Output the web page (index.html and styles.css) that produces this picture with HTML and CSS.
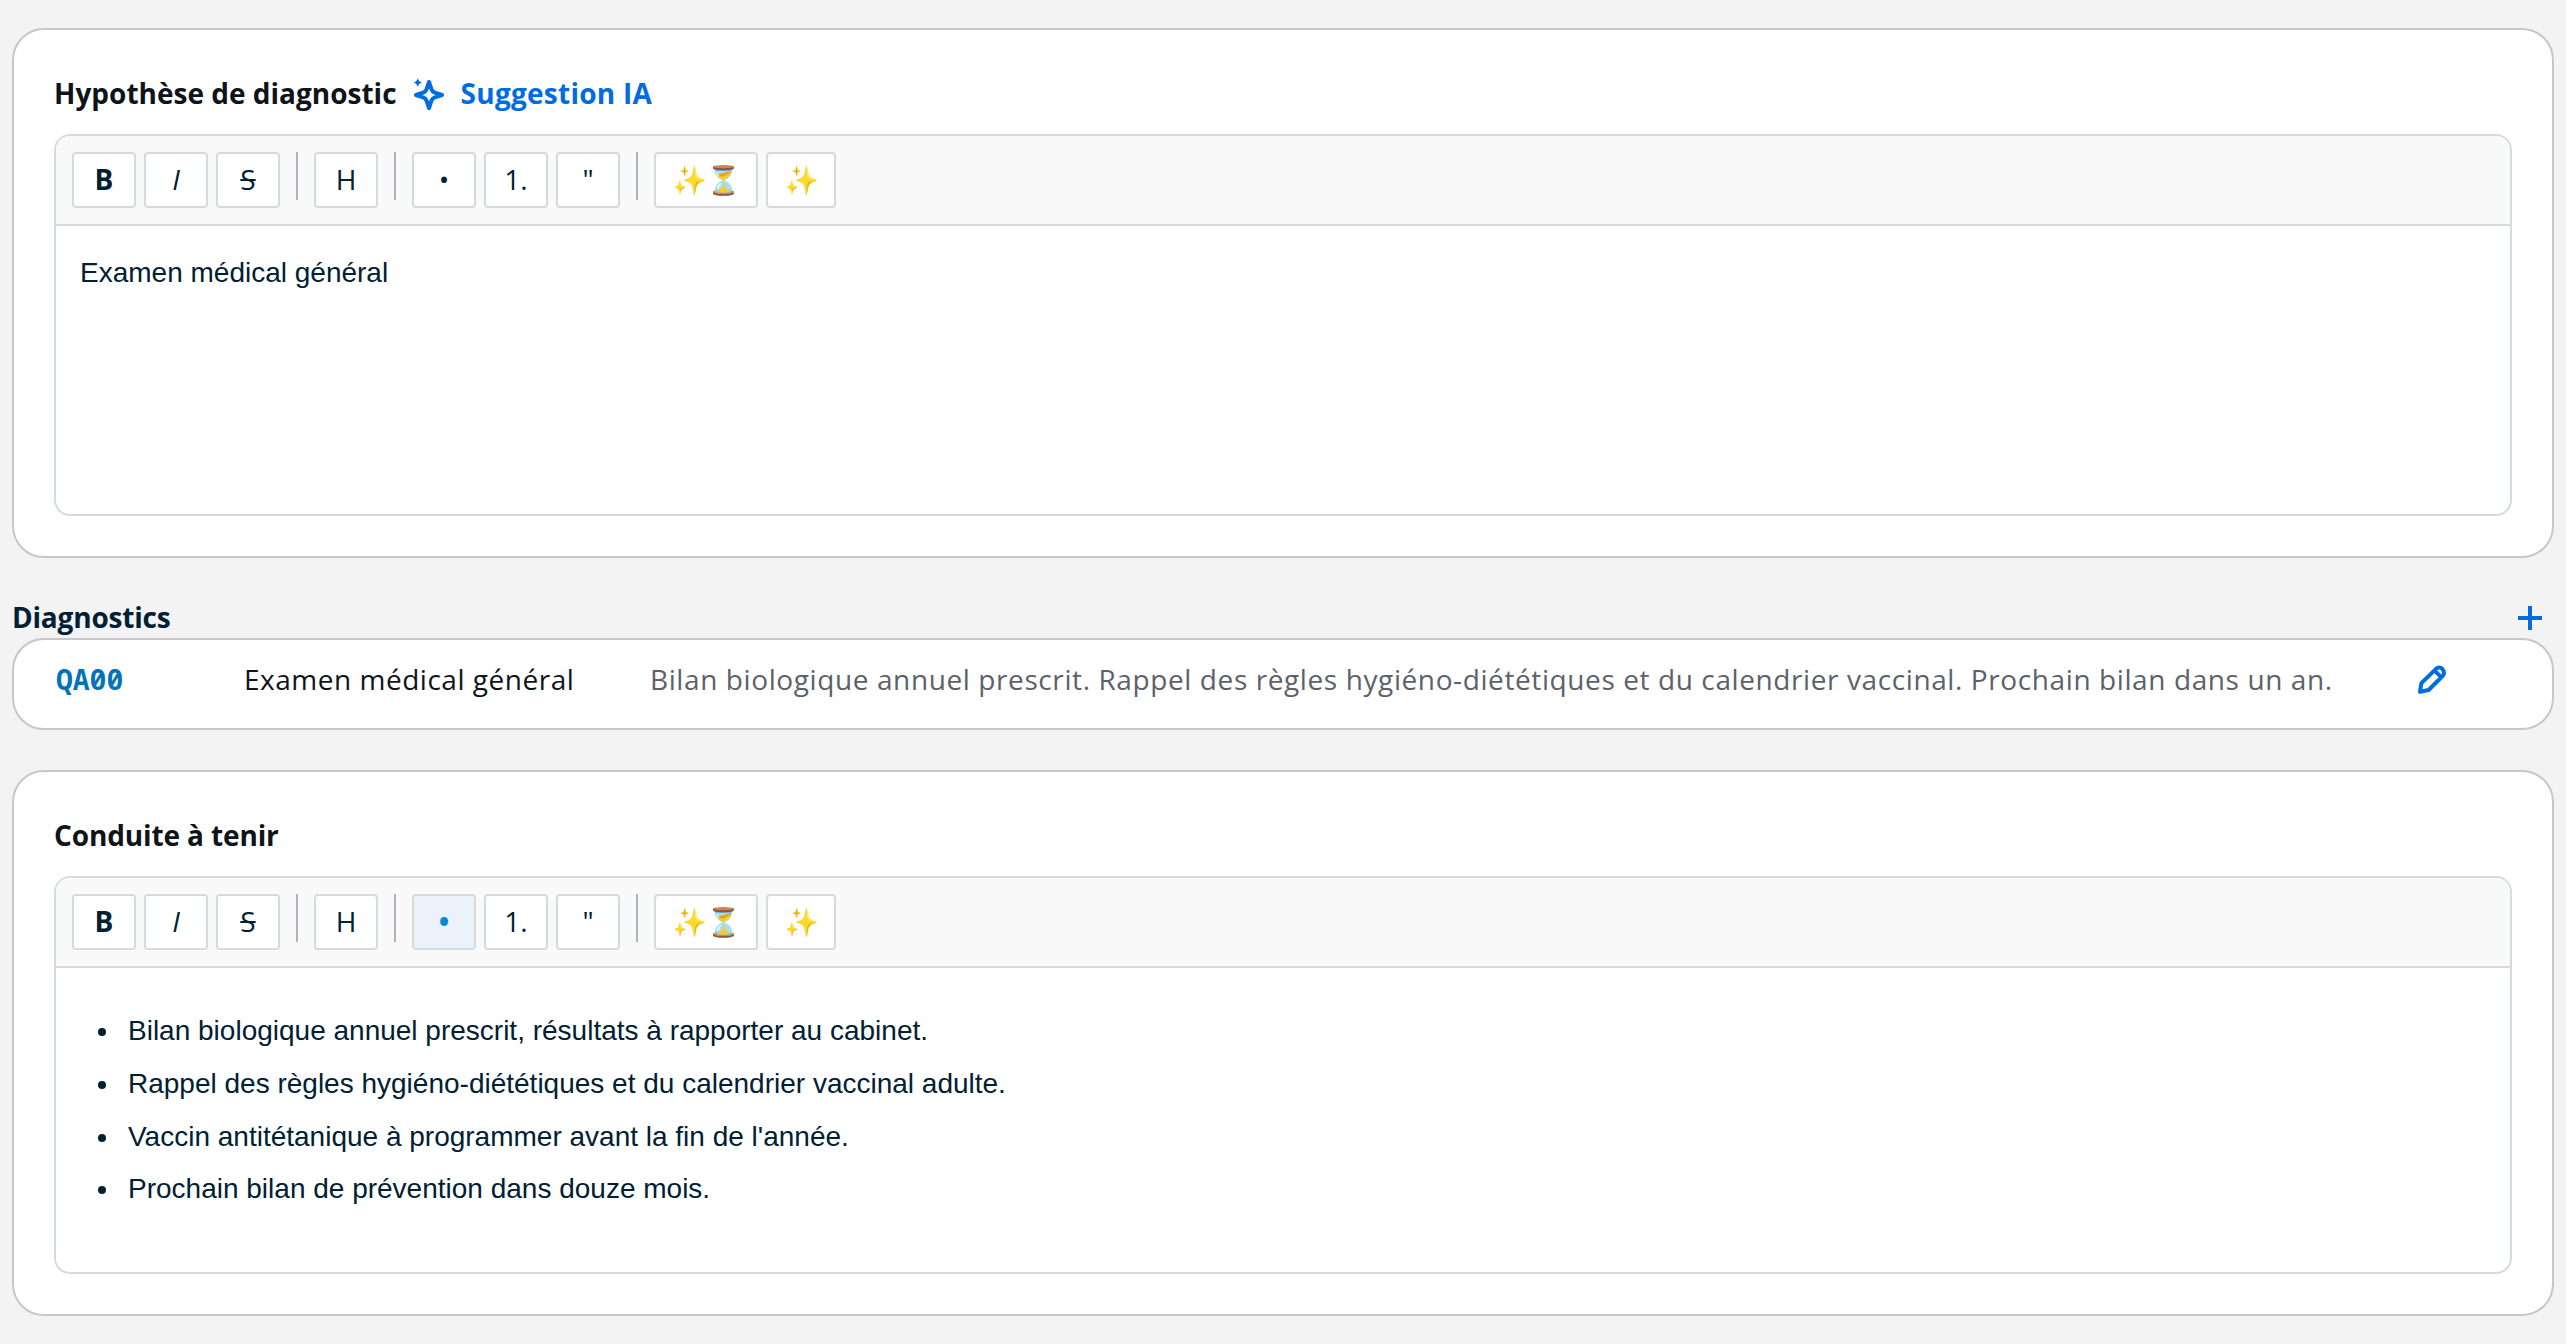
FILE: index.html
```html
<!DOCTYPE html>
<html lang="fr">
<head>
    <meta charset="UTF-8" />
    <title>Consultation</title>
    <link rel="stylesheet" href="styles.css">
</head>
<body>
    <section class="card editor-card">
        <div class="card-header">
            <h2>Hypothèse de diagnostic</h2>
            <a class="suggestion">
                <svg class="icon" viewBox="0 0 16 16">
                    <path class="stroke" d="M8 2L9.2 5.6C9.5 6.4 10.1 7 10.9 7.3L14.5 8.5L10.9 9.7C10.1 10 9.5 10.6 9.2 11.4L8 15L6.8 11.4C6.5 10.6 5.9 10 5.1 9.7L1.5 8.5L5.1 7.3C5.9 7 6.5 6.4 6.8 5.6Z" />
                    <path class="fill" d="M2.4 0.1C2.9 1.5 3.2 1.8 4.6 2.3C3.2 2.8 2.9 3.1 2.4 4.5C1.9 3.1 1.6 2.8 0.2 2.3C1.6 1.8 1.9 1.5 2.4 0.1Z" />
                </svg>
                <span>Suggestion IA</span>
            </a>
        </div>
        <div class="editor">
            <div class="toolbar">
                <button class="bold">B</button>
                <button class="italic">I</button>
                <button class="strike">S</button>
                <span class="separator"></span>
                <button>H</button>
                <span class="separator"></span>
                <button>•</button>
                <button>1.</button>
                <button>"</button>
                <span class="separator"></span>
                <button class="emoji">✨⏳</button>
                <button class="emoji">✨</button>
            </div>
            <div class="content" contenteditable="true">
                <p>Examen médical général</p>
            </div>
        </div>
    </section>

    <div class="section-header">
        <h2>Diagnostics</h2>
        <a class="add">
            <svg class="icon" viewBox="0 0 16 16"><path class="stroke" d="M8 2V14M2 8H14" /></svg>
        </a>
    </div>
    <section class="card diagnostic">
        <code>QA00</code>
        <span class="name">Examen médical général</span>
        <span class="note">Bilan biologique annuel prescrit. Rappel des règles hygiéno-diététiques et du calendrier vaccinal. Prochain bilan dans un an.</span>
        <a class="edit">
            <svg class="icon" viewBox="0 0 16 16">
                <path class="stroke" d="M2 13.9L2.7 9.6L10 2.4C10.9 1.6 12.2 1.6 13.1 2.4L13.4 2.8C14.2 3.6 14.2 5 13.4 5.9L6.3 13ZM9.3 3.3L12.6 6.6" />
            </svg>
        </a>
    </section>

    <section class="card editor-card">
        <div class="card-header plan">
            <h2>Conduite à tenir</h2>
        </div>
        <div class="editor">
            <div class="toolbar">
                <button class="bold">B</button>
                <button class="italic">I</button>
                <button class="strike">S</button>
                <span class="separator"></span>
                <button>H</button>
                <span class="separator"></span>
                <button class="active">•</button>
                <button>1.</button>
                <button>"</button>
                <span class="separator"></span>
                <button class="emoji">✨⏳</button>
                <button class="emoji">✨</button>
            </div>
            <div class="content" contenteditable="true">
                <ul>
                    <li>Bilan biologique annuel prescrit, résultats à rapporter au cabinet.</li>
                    <li>Rappel des règles hygiéno-diététiques et du calendrier vaccinal adulte.</li>
                    <li>Vaccin antitétanique à programmer avant la fin de l'année.</li>
                    <li>Prochain bilan de prévention dans douze mois.</li>
                </ul>
            </div>
        </div>
    </section>
</body>
</html>
```
FILE: styles.css
```css
* {
    box-sizing: border-box;
}
body {
    font-family: 'Open Sans', sans-serif;
    font-size: 28px;
    line-height: 40px;
    background-color: #f3f3f3;
    color: #0f141a;
    margin: 0;
    padding: 28px 12px;
}
h2 {
    font-size: 28px;
    font-weight: 700;
    line-height: 40px;
    margin: 0 0 2px;
}
.card {
    background-color: #fff;
    border: 2px solid #c6c6cd;
    border-radius: 32px;
}
.editor-card {
    padding: 44px 40px 40px;
}
.card-header {
    display: flex;
    align-items: center;
    gap: 16px;
    height: 40px;
    margin-bottom: 20px;
}
.card-header.plan {
    letter-spacing: -0.13px;
}
.suggestion {
    display: flex;
    align-items: center;
    gap: 16px;
    font-weight: 700;
    letter-spacing: 0.26px;
    color: #006ce0;
    cursor: pointer;
}
.suggestion span {
    margin-bottom: 2px;
}
.icon {
    display: block;
    width: 32px;
    height: 32px;
    color: #006ce0;
}
.stroke {
    fill: none;
    stroke: currentColor;
    stroke-width: 2;
    stroke-linejoin: round;
}
.fill {
    fill: currentColor;
}
.editor {
    border: 2px solid #d5dbdb;
    border-radius: 16px;
    overflow: hidden;
}
.toolbar {
    display: flex;
    gap: 8px;
    height: 90px;
    padding: 16px;
    background-color: #f9f9f9;
    border-bottom: 2px solid #d5dbdb;
}
.toolbar button {
    min-width: 64px;
    height: 56px;
    padding: 0 16px 2px;
    border: 2px solid #d5dbdb;
    border-radius: 4px;
    background-color: #fff;
    color: #002033;
    font-family: inherit;
    font-size: 28px;
    line-height: 40px;
    cursor: pointer;
}
.toolbar .bold {
    font-weight: 700;
}
.toolbar .italic {
    font-style: italic;
}
.toolbar .strike {
    text-decoration: line-through;
}
.toolbar .emoji {
    letter-spacing: -1px;
}
.toolbar .active {
    background-color: #ecf2fa;
    color: #0788d1;
    font-weight: 700;
}
.separator {
    width: 2px;
    height: 48px;
    margin: 0 8px;
    background-color: #aab7b8;
}
.content {
    min-height: 288px;
    padding: 25px 24px 23px;
    font-family: 'Liberation Sans', Arial, sans-serif;
    font-size: 28px;
    line-height: 44.8px;
    color: #002033;
    outline: none;
}
.content p {
    margin: 0;
}
.content ul {
    list-style: none;
    margin: 16px 0 28.8px;
    padding-left: 48px;
}
.content li {
    margin-bottom: 8px;
}
.content li::before {
    content: '';
    display: inline-block;
    width: 8px;
    height: 8px;
    margin: 0 22px 4px -30px;
    border-radius: 50%;
    background-color: currentColor;
}
/* the last item keeps its bottom margin inside the list */
.content li:last-child {
    margin-bottom: 0;
    padding-bottom: 8px;
}
.section-header {
    display: flex;
    align-items: center;
    justify-content: space-between;
    height: 40px;
    margin-top: 40px;
    padding-right: 8px;
    letter-spacing: -0.2px;
    color: #002033;
}
.diagnostic {
    display: flex;
    align-items: center;
    height: 92px;
    margin-bottom: 40px;
    padding: 0 40px 8px;
}
.diagnostic code {
    width: 190px;
    margin-bottom: 3px;
    padding-left: 2px;
    font-family: 'Noto Sans Mono', 'Roboto Mono', monospace;
    font-weight: 700;
    color: #0073bb;
}
.diagnostic .name {
    width: 406px;
    margin-bottom: 2px;
    letter-spacing: 0.52px;
}
.diagnostic .note {
    width: 1766px;
    margin-bottom: 2px;
    letter-spacing: 0.6px;
    color: #5d616b;
}
```
